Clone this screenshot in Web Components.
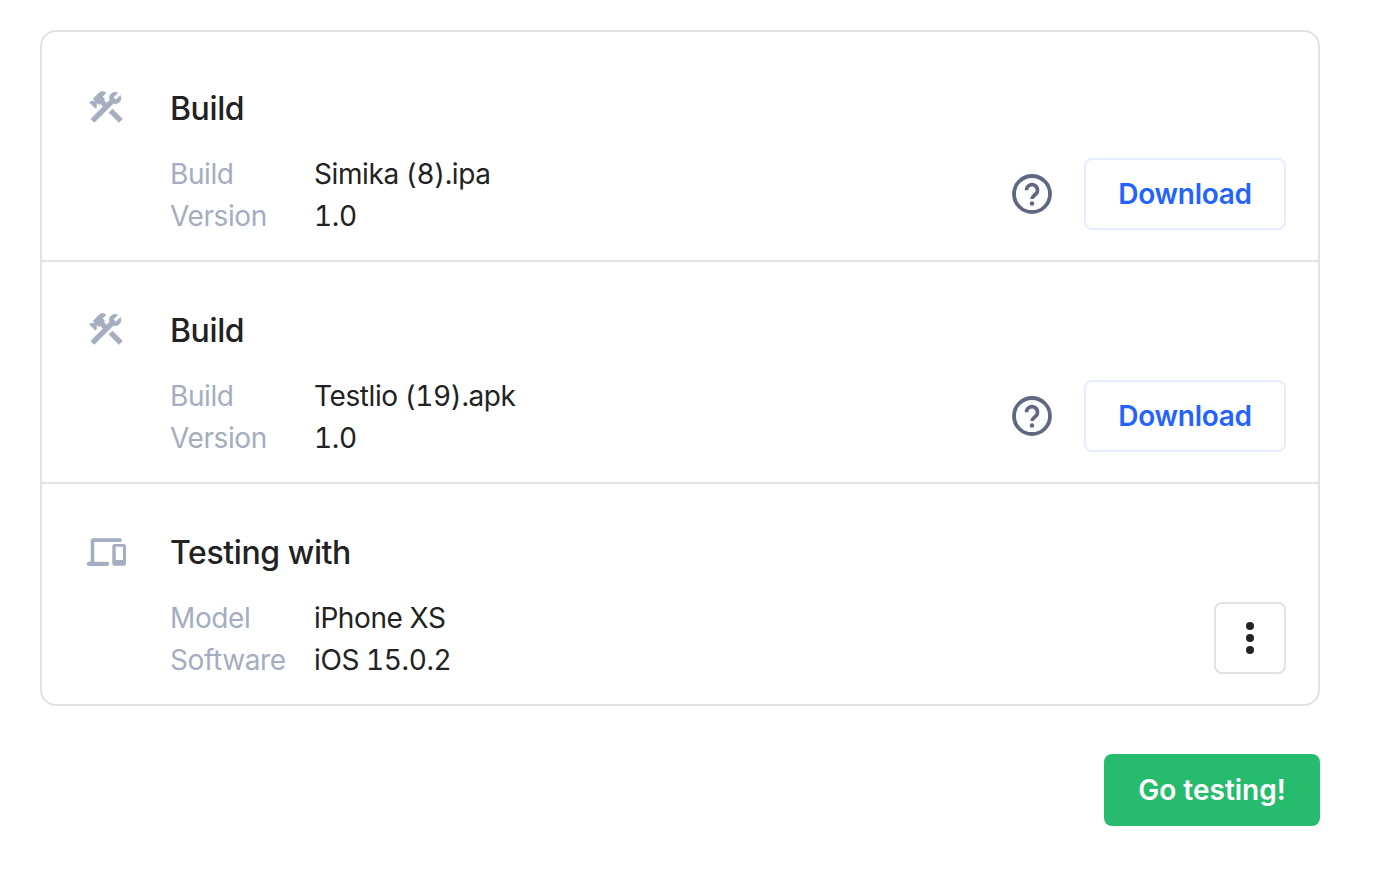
<!DOCTYPE html>
<html>
<head>
<meta charset="utf-8">
<title>Testing</title>
<style>
  html, body { margin: 0; background: #fff; }
  body { font-family: Inter, "Liberation Sans", sans-serif; color: #222; }
</style>
</head>
<body>
<run-page>
  <run-card>
    <run-section heading="Build">
      <tools-icon slot="icon"></tools-icon>
      <info-line label="Build">Simika (8).ipa</info-line>
      <info-line label="Version">1.0</info-line>
      <help-icon slot="actions"></help-icon>
      <app-button slot="actions" kind="outline">Download</app-button>
    </run-section>
    <run-section heading="Build">
      <tools-icon slot="icon"></tools-icon>
      <info-line label="Build">Testlio (19).apk</info-line>
      <info-line label="Version">1.0</info-line>
      <help-icon slot="actions"></help-icon>
      <app-button slot="actions" kind="outline">Download</app-button>
    </run-section>
    <run-section heading="Testing with">
      <svg slot="icon" width="42" height="42" viewBox="0 1 42 42" fill="#a5adc0"><path d="M4.700 10.300a3 3 0 0 1 3-3H34a1.850 1.850 0 0 1 0 3.700H8.300v19.700H21.200a2.150 2.150 0 0 1 0 4.300H2.850a2.150 2.150 0 0 1 0-4.300H4.700Z"/><path fill-rule="evenodd" d="M28.800 13H37.500a2.500 2.500 0 0 1 2.500 2.500V32.200a2.500 2.500 0 0 1-2.500 2.500H28.800a2.500 2.500 0 0 1-2.500-2.500V15.500a2.500 2.500 0 0 1 2.500-2.500ZM29.700 15.700V29H37V15.700Z"/></svg>
      <info-line label="Model">iPhone XS</info-line>
      <info-line label="Software">iOS 15.0.2</info-line>
      <app-button slot="actions" kind="square">
        <svg width="8" height="32" viewBox="0 0 8 32" fill="#222"><circle cx="4" cy="4" r="4"/><circle cx="4" cy="16" r="4"/><circle cx="4" cy="28" r="4"/></svg>
      </app-button>
    </run-section>
  </run-card>
  <app-button slot="footer" kind="primary">Go testing!</app-button>
</run-page>

<script>
class RunPage extends HTMLElement {
    constructor() {
        super()
        this.shadow = this.attachShadow({ mode: 'open' });
    }

    connectedCallback() {
        this.shadow.innerHTML = `
        <style>
            :host { display: block; width: 1280px; padding: 30px 0 48px 40px; }
            .footer { display: flex; justify-content: flex-end; margin-top: 48px; }
        </style>
        <slot></slot>
        <div class="footer"><slot name="footer"></slot></div>
        `;
    }
}

class RunCard extends HTMLElement {
    constructor() {
        super()
        this.shadow = this.attachShadow({ mode: 'open' });
    }

    connectedCallback() {
        this.shadow.innerHTML = `
        <style>
            :host { display: block; border: 2px solid #e2e2e2; border-radius: 16px; padding-top: 8px; }
            ::slotted(run-section:not(:last-child)) { border-bottom: 2px solid #e2e2e2; }
        </style>
        <slot></slot>
        `;
    }
}

class RunSection extends HTMLElement {
    constructor() {
        super()
        this.shadow = this.attachShadow({ mode: 'open' });
    }

    connectedCallback() {
        const heading = this.getAttribute('heading');
        this.shadow.innerHTML = `
        <style>
            :host { display: grid; grid-template-columns: 84px 1fr auto; padding: 51px 32px 23px 44px; }
            .icon { height: 36px; display: flex; align-items: center; }
            .heading { grid-column: 2 / 4; font-size: 32px; font-weight: 500; letter-spacing: -0.4px; line-height: 36px; margin-bottom: 26px; color: #222; }
            .details { grid-column: 2; }
            .actions { display: flex; align-items: center; column-gap: 32px; margin-top: -2px; }
        </style>
        <div class="icon"><slot name="icon"></slot></div>
        <div class="heading">${heading}</div>
        <div class="details"><slot></slot></div>
        <div class="actions"><slot name="actions"></slot></div>
        `;
    }
}

class InfoLine extends HTMLElement {
    constructor() {
        super()
        this.shadow = this.attachShadow({ mode: 'open' });
    }

    connectedCallback() {
        this.shadow.innerHTML = `
        <style>
            :host { display: flex; font-size: 28px; letter-spacing: -0.4px; line-height: 42px; color: #222; }
            .label { width: 144px; color: #a5adc0; }
            .value { font-variant-numeric: tabular-nums; }
        </style>
        <span class="label">${this.getAttribute('label')}</span>
        <span class="value"><slot></slot></span>
        `;
    }
}

class ToolsIcon extends HTMLElement {
    constructor() {
        super()
        this.shadow = this.attachShadow({ mode: 'open' });
    }

    connectedCallback() {
        this.shadow.innerHTML = `
        <style>
            :host { display: block; width: 40px; height: 40px; }
            svg { display: block; }
        </style>
        <svg width="40" height="40" viewBox="0 1.2 24 24" fill="#a5adc0" stroke="#a5adc0" stroke-width="0.3">
            <path d="M13.78 15.3L19.78 21.3L21.89 19.14L15.89 13.14L13.78 15.3M17.5 10.1C17.11 10.1 16.69 10.05 16.36 9.91L4.97 21.25L2.86 19.14L10.27 11.74L8.5 9.96L7.78 10.66L6.33 9.25V12.11L5.63 12.81L2.11 9.25L2.81 8.55H5.62L4.22 7.14L7.78 3.58C8.95 2.41 10.83 2.41 12 3.58L9.89 5.74L11.3 7.14L10.59 7.85L12.38 9.63L14.2 7.75C14.06 7.42 14 7 14 6.63C14 4.66 15.56 3.11 17.5 3.11C18.09 3.11 18.61 3.25 19.08 3.53L16.41 6.2L17.91 7.7L20.58 5.03C20.86 5.5 21 6 21 6.63C21 8.59 19.45 10.1 17.5 10.1Z"/>
        </svg>
        `;
    }
}

class HelpIcon extends HTMLElement {
    constructor() {
        super()
        this.shadow = this.attachShadow({ mode: 'open' });
    }

    connectedCallback() {
        this.shadow.innerHTML = `
        <style>
            :host { display: block; width: 40px; height: 40px; }
            svg { display: block; }
        </style>
        <svg width="40" height="40" viewBox="0 0 40 40" fill="none" stroke="#5f6880" stroke-width="3.800">
            <circle cx="20" cy="20" r="18"/>
            <path stroke-width="3.600" d="M14.500 16.200a5.500 5.500 0 1 1 9 4.200c-2 1.700-3.500 2.400-3.500 4.600"/>
            <circle cx="20" cy="29.500" r="2.200" fill="#5f6880" stroke="none"/>
        </svg>
        `;
    }
}

class AppButton extends HTMLElement {
    constructor() {
        super()
        this.shadow = this.attachShadow({ mode: 'open' });
    }

    connectedCallback() {
        this.shadow.innerHTML = `
        <style>
            :host { display: flex; align-items: center; justify-content: center; box-sizing: border-box; height: 72px; border-radius: 8px; font-size: 28px; font-weight: 600; letter-spacing: -0.3px; line-height: 36px; }
            :host([kind="outline"]) { width: 202px; border: 2px solid #e6edff; color: #2563ff; }
            :host([kind="square"]) { width: 72px; border: 2px solid #e2e2e2; }
            :host([kind="primary"]) { width: 216px; background: #27bb6e; color: #fff; letter-spacing: 0; }
        </style>
        <slot></slot>
        `;
    }
}

customElements.define('run-page', RunPage);
customElements.define('run-card', RunCard);
customElements.define('run-section', RunSection);
customElements.define('info-line', InfoLine);
customElements.define('tools-icon', ToolsIcon);
customElements.define('help-icon', HelpIcon);
customElements.define('app-button', AppButton);
</script>
</body>
</html>
